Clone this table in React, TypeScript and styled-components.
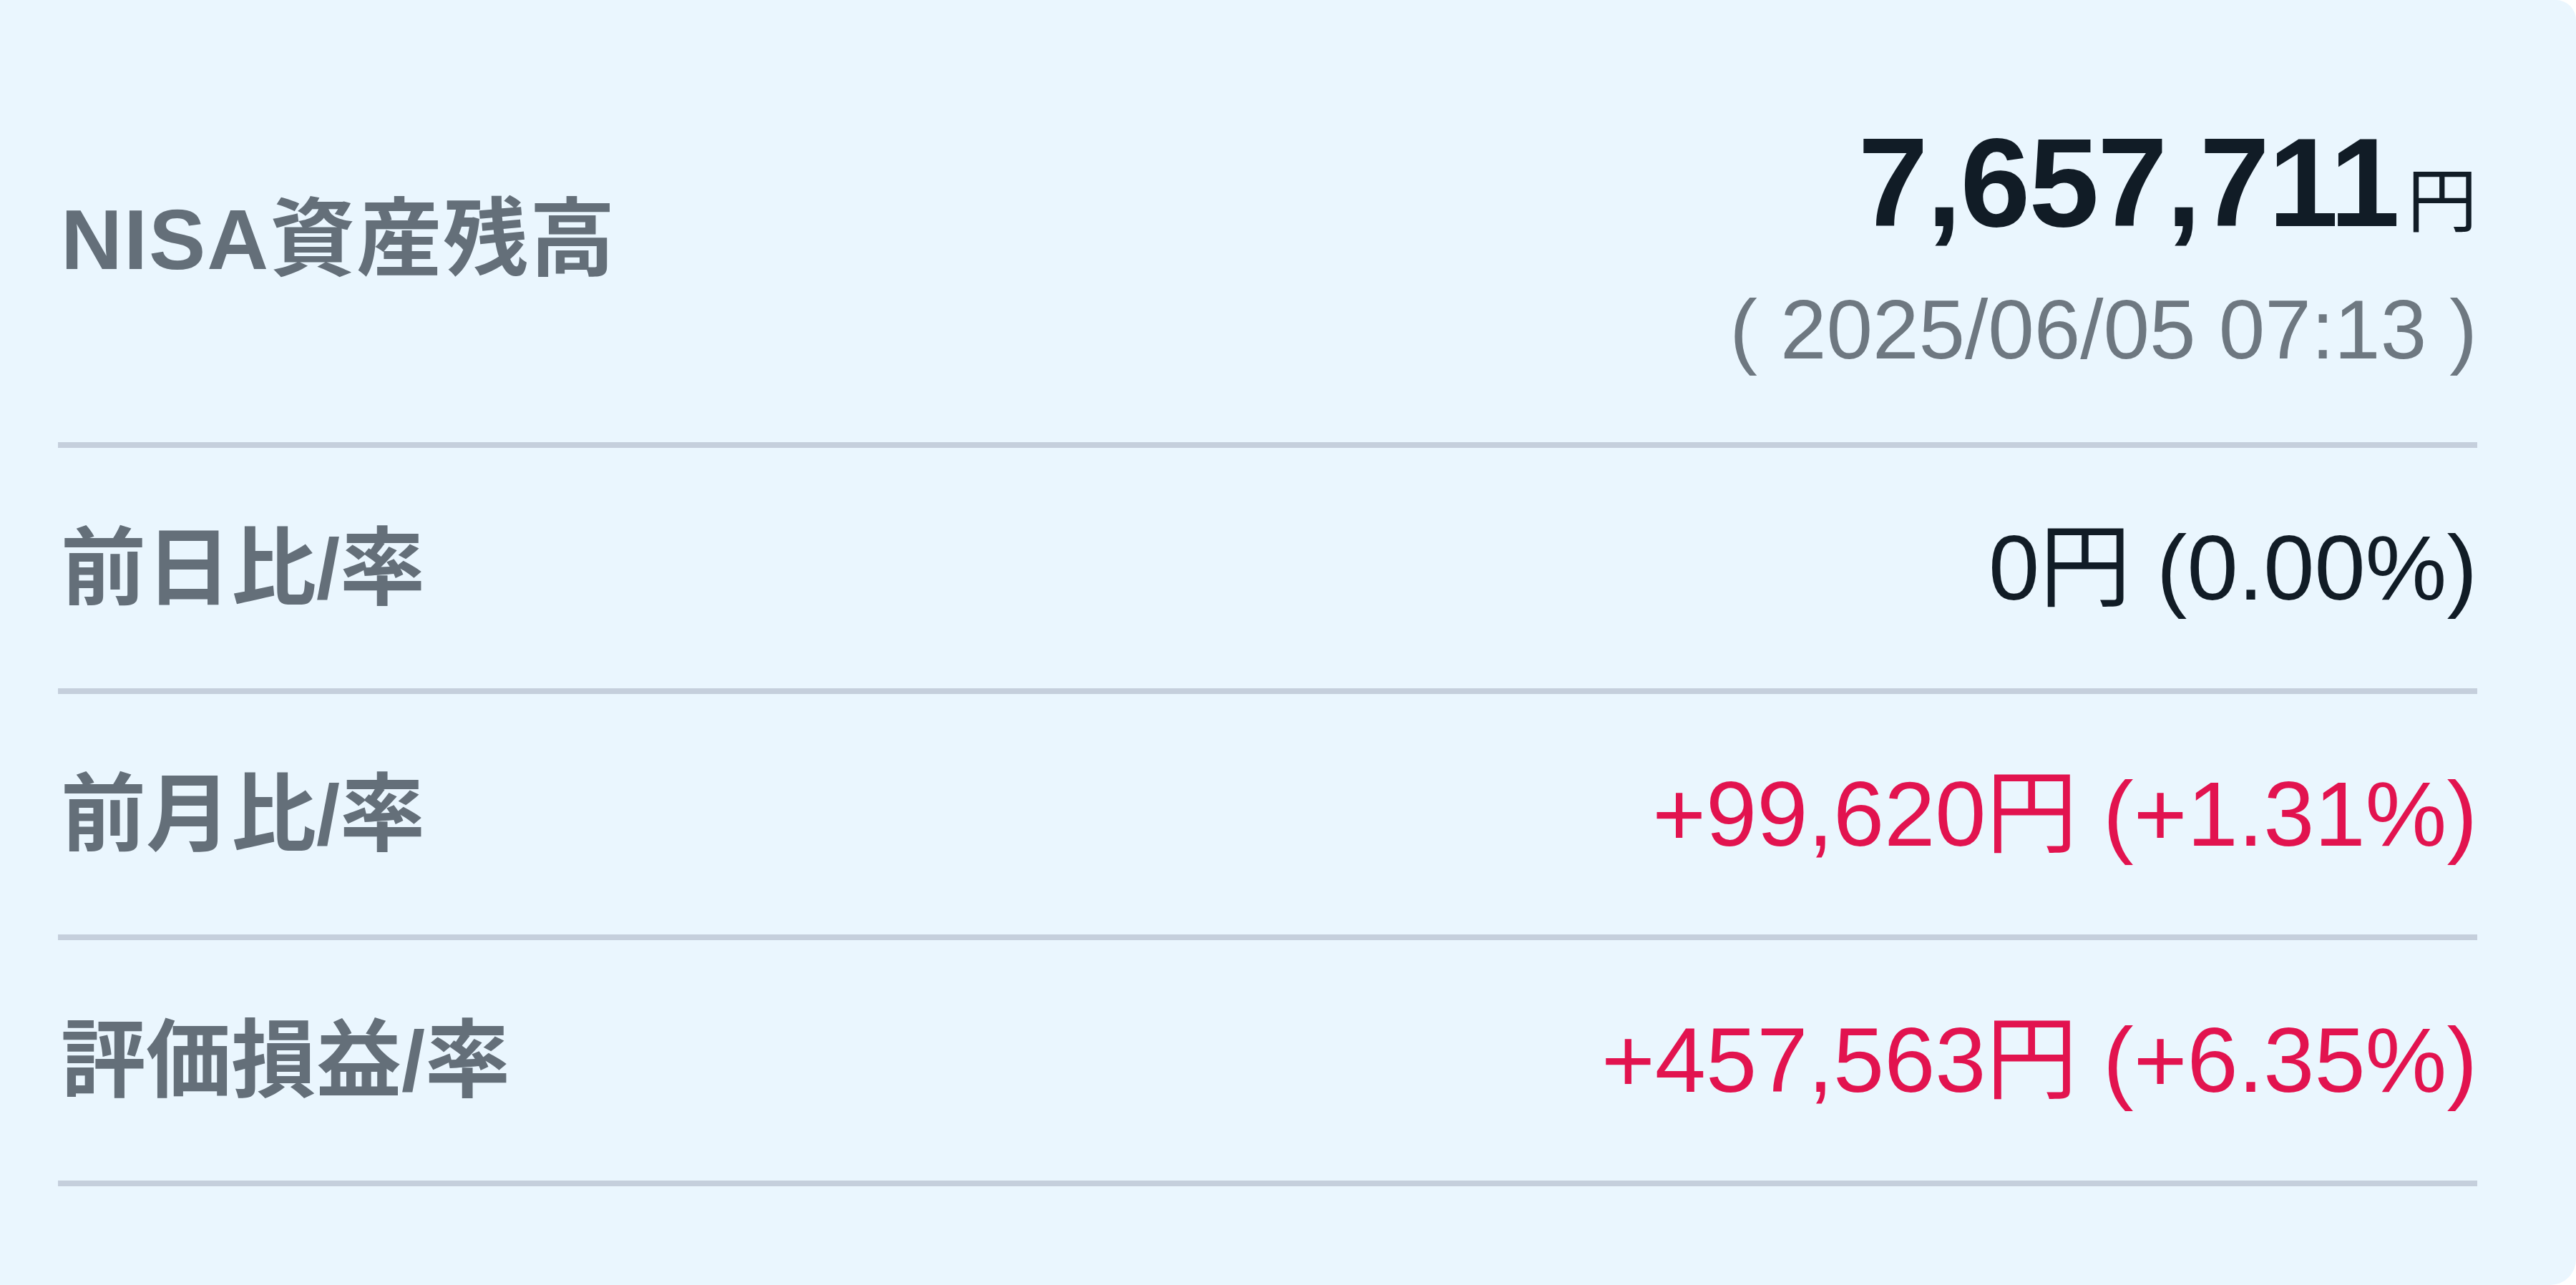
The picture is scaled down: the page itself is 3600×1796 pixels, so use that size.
import React from 'react';
import styled, { createGlobalStyle } from 'styled-components';

const GlobalStyle = createGlobalStyle`
  html, body {
    margin: 0;
    padding: 0;
    background: #ffffff;
  }
  body {
    font-family: "Liberation Sans", "Noto Sans CJK JP", sans-serif;
  }
`;

const Card = styled.div`
  width: 3600px;
  height: 1796px;
  box-sizing: border-box;
  padding: 0 138px 0 81px;
  background: #eaf6fe;
  border-radius: 0 28px 36px 0;
  overflow: hidden;
`;

const TopRow = styled.div`
  display: flex;
  justify-content: space-between;
  align-items: flex-start;
  height: 626px;
  box-sizing: border-box;
  padding-top: 167px;
  border-bottom: 8px solid #c5cfdc;
`;

const Label = styled.div<{ $offset?: number }>`
  margin-top: ${p => p.$offset ?? 0}px;
  padding-left: 4px;
  font-family: "Liberation Sans", "Noto Sans CJK JP", sans-serif;
  font-size: 119px;
  font-weight: 700;
  line-height: 1;
  color: #646f79;
  white-space: nowrap;
`;

const Title = styled(Label)`
  letter-spacing: 2px;
`;

const Balance = styled.div`
  display: flex;
  flex-direction: column;
  align-items: flex-end;
`;

const Amount = styled.div`
  font-size: 176px;
  font-weight: 700;
  line-height: 1;
  letter-spacing: -2px;
  color: #111c26;
  white-space: nowrap;
`;

const Yen = styled.span`
  margin-left: 12px;
  font-family: "Noto Sans CJK JP", sans-serif;
  font-size: 98px;
  font-weight: 400;
  letter-spacing: 0;
`;

const Stamp = styled.div`
  margin-top: 60px;
  font-size: 116px;
  line-height: 1;
  color: #6e7881;
  white-space: nowrap;
`;

const Row = styled.div`
  display: flex;
  justify-content: space-between;
  align-items: center;
  height: 344px;
  box-sizing: border-box;
  border-bottom: 8px solid #c5cfdc;
`;

const Value = styled.div<{ $tone: 'flat' | 'up' }>`
  font-size: 128px;
  line-height: 1;
  color: ${p => (p.$tone === 'up' ? '#e2134f' : '#111c26')};
  white-space: nowrap;
`;

const rows: { label: string; value: string; tone: 'flat' | 'up' }[] = [
  { label: '前日比/率', value: '0円 (0.00%)', tone: 'flat' },
  { label: '前月比/率', value: '+99,620円 (+1.31%)', tone: 'up' },
  { label: '評価損益/率', value: '+457,563円 (+6.35%)', tone: 'up' },
];

function App() {
  return (
    <>
      <GlobalStyle />
      <Card>
        <TopRow>
          <Title $offset={108}>NISA資産残高</Title>
          <Balance>
            <Amount>
              7,657,711<Yen>円</Yen>
            </Amount>
            <Stamp>( 2025/06/05 07:13 )</Stamp>
          </Balance>
        </TopRow>
        {rows.map(r => (
          <Row key={r.label}>
            <Label>{r.label}</Label>
            <Value $tone={r.tone}>{r.value}</Value>
          </Row>
        ))}
      </Card>
    </>
  );
}

export default App;
